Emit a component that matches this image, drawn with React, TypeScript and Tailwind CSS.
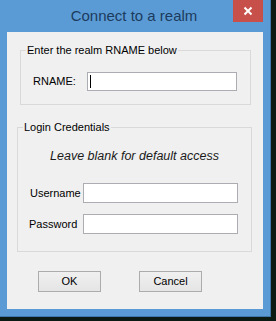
import { useState } from "react";

export default function App() {
  const [form, setForm] = useState({ rname: "", username: "", password: "" });

  const handleChange = (e: React.ChangeEvent<HTMLInputElement>) => {
    setForm({ ...form, [e.target.name]: e.target.value });
  };

  return (
    <div className="w-[276px] h-[321px] bg-[#0b1a12] overflow-hidden font-['Liberation_Sans',Arial,sans-serif]">
      <div className="w-[271px] h-[317px] bg-[#5b9bd5] border-r border-b border-[#3f77ad] flex flex-col">
        {/* Title bar */}
        <div className="h-[32px] flex items-start">
          <div className="flex-1 h-[32px] flex items-center justify-center pl-[35px] text-[15px] text-[#1c3b5e]">
            Connect to a realm
          </div>
          <button className="w-[30px] h-[22px] mr-[7px] bg-[#c7504b] flex items-center justify-center">
            <svg width="10" height="10" viewBox="0 0 10 10">
              <path d="M1.5 1.5 L8.5 8.5 M8.5 1.5 L1.5 8.5" stroke="white" strokeWidth="2" />
            </svg>
          </button>
        </div>

        {/* Client area */}
        <div className="ml-[7px] w-[256px] h-[277px] bg-[#f0f0f0] flex flex-col text-[11px] text-black">
          <fieldset className="ml-[13px] mt-[11px] w-[231px] h-[62px] border border-[#d9d9d9] px-0">
            <legend className="ml-[5px] px-[1px] leading-[14px]">Enter the realm RNAME below</legend>
            <div className="flex items-center mt-[15px]">
              <span className="ml-[12px] w-[54px]">RNAME:</span>
              <div className="relative">
                <input
                  name="rname"
                  autoFocus
                  value={form.rname}
                  onChange={handleChange}
                  className="w-[150px] h-[19px] bg-white border border-[#abadb3] outline-none px-[2px] caret-black"
                />
                {/* text caret */}
                {form.rname === "" && (
                  <span className="absolute left-[3px] top-[3px] w-[1px] h-[13px] bg-black" />
                )}
              </div>
            </div>
          </fieldset>

          <fieldset className="ml-[10px] mt-[15px] w-[235px] h-[132px] border border-[#d9d9d9] px-0">
            <legend className="ml-[5px] px-[1px] leading-[14px]">Login Credentials</legend>
            <p className="mt-[13px] text-center italic text-[12.5px] text-[#1a1a1a]">
              Leave blank for default access
            </p>
            <div className="flex items-center mt-[17px]">
              <span className="ml-[12px] w-[53px]">Username</span>
              <input
                name="username"
                value={form.username}
                onChange={handleChange}
                className="w-[155px] h-[20px] bg-white border border-[#abadb3] outline-none px-[2px]"
              />
            </div>
            <div className="flex items-center mt-[11px]">
              <span className="ml-[11px] w-[54px]">Password</span>
              <input
                name="password"
                type="password"
                value={form.password}
                onChange={handleChange}
                className="w-[155px] h-[20px] bg-white border border-[#abadb3] outline-none px-[2px]"
              />
            </div>
          </fieldset>

          <div className="flex mt-[19px] ml-[31px] gap-[38px]">
            <button className="w-[63px] h-[21px] border border-[#acacac] bg-gradient-to-b from-[#f0f0f0] to-[#e5e5e5] text-[11px]">
              OK
            </button>
            <button className="w-[63px] h-[21px] border border-[#acacac] bg-gradient-to-b from-[#f0f0f0] to-[#e5e5e5] text-[11px]">
              Cancel
            </button>
          </div>
        </div>
      </div>
    </div>
  );
}
